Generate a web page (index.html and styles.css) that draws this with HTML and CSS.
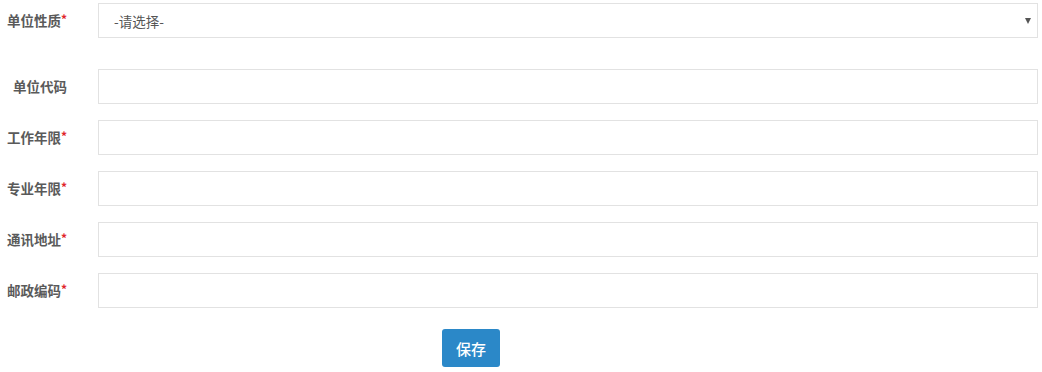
FILE: index.html
```html
<!DOCTYPE html>
<html lang="zh-CN">
<head>
<meta charset="utf-8">
<title>单位信息</title>
<link rel="stylesheet" href="styles.css">
</head>
<body>
<form class="form">
  <div class="row row-select">
    <label class="label">单位性质<span class="req">*</span></label>
    <div class="select-wrap">
      <select class="control select">
        <option>-请选择-</option>
      </select>
    </div>
  </div>
  <div class="row">
    <label class="label">单位代码</label>
    <input class="control" type="text">
  </div>
  <div class="row">
    <label class="label">工作年限<span class="req">*</span></label>
    <input class="control" type="text">
  </div>
  <div class="row">
    <label class="label">专业年限<span class="req">*</span></label>
    <input class="control" type="text">
  </div>
  <div class="row">
    <label class="label">通讯地址<span class="req">*</span></label>
    <input class="control" type="text">
  </div>
  <div class="row">
    <label class="label">邮政编码<span class="req">*</span></label>
    <input class="control" type="text">
  </div>
  <div class="actions">
    <button type="button" class="btn">保存</button>
  </div>
</form>
</body>
</html>
```

FILE: styles.css
```css
html, body {
  margin: 0;
  padding: 0;
  background: #fff;
}

body {
  font-family: "Noto Sans CJK SC", "Noto Sans", "Liberation Sans", sans-serif;
  color: #555;
}

.form {
  padding: 3px 4px 0 0;
}

.row {
  display: flex;
  align-items: center;
  height: 35px;
  margin-bottom: 16px;
}

.row-select {
  margin-bottom: 31px;
}

.label {
  width: 67px;
  flex: none;
  margin-right: 31px;
  text-align: right;
  font-size: 13.5px;
  font-weight: bold;
  color: #5a5a5a;
  white-space: nowrap;
  line-height: 1;
}

.req {
  color: #e0252b;
  font-size: 12px;
  font-weight: bold;
  vertical-align: 2px;
}

.control {
  flex: 1;
  box-sizing: border-box;
  height: 35px;
  border: 1px solid #e2e2e2;
  border-radius: 0;
  background: #fff;
  font-family: inherit;
  font-size: 13.5px;
  color: #555;
  padding: 0 15px;
  outline: none;
  margin: 0;
  min-width: 0;
}

.select-wrap {
  flex: 1;
  display: flex;
  position: relative;
}

.select {
  -webkit-appearance: none;
  appearance: none;
  width: 100%;
}

.select-wrap::after {
  content: "";
  position: absolute;
  right: 7px;
  top: 15px;
  border-left: 3.5px solid transparent;
  border-right: 3.5px solid transparent;
  border-top: 6px solid #555;
  pointer-events: none;
}

.actions {
  display: flex;
  padding-top: 5px;
  padding-left: 442px;
}

.btn {
  width: 58px;
  height: 38px;
  border: none;
  border-radius: 3px;
  background: #2b88c8;
  color: #fff;
  font-family: inherit;
  font-size: 15px;
  font-weight: 500;
  padding: 0;
}
```
